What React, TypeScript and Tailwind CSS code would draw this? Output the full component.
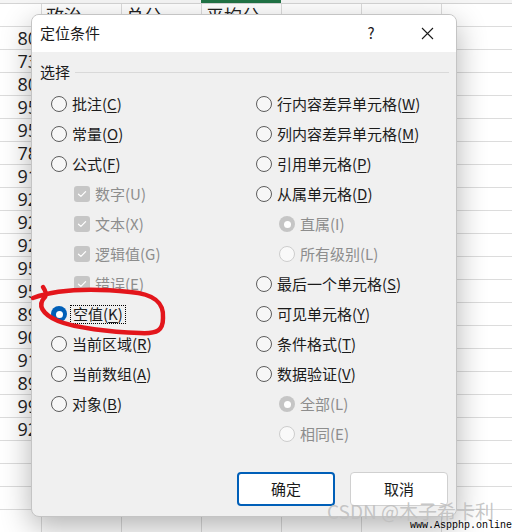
import React from "react";

const cjk = { fontFamily: '"Noto Sans CJK SC", "Noto Sans", sans-serif' };

const nums = [80, 73, 80, 95, 95, 78, 91, 92, 92, 92, 95, 95, 89, 90, 91, 89, 99, 92];

function Sheet() {
  const rows = Array.from({ length: 23 }, (_, i) => i);
  return (
    <div className="flex flex-col w-[522px]">
      <div className="flex h-[4px] border-b border-[#d4d4d4] bg-[#f5f5f5]">
        <div className="w-[201px]" />
        <div className="w-[80px] h-[3px] bg-[#217346]" />
      </div>
      {rows.map((r) => (
        <div key={r} className="flex h-[23px] border-b border-[#dcdcdc]">
          <div className="w-[42px] border-r border-[#dcdcdc] flex items-center justify-end pr-[3px] text-[18px] text-[#222]" style={{ fontFamily: '"Open Sans", sans-serif' }}>
            {r >= 1 && r <= 18 ? nums[r - 1] : ""}
          </div>
          {["政治", "总分", "平均分", "", "", ""].map((h, c) => (
            <div key={c} className="w-[80px] border-r border-[#dcdcdc] flex items-center pl-[4px] text-[18px] text-[#222]" style={cjk}>
              {r === 0 ? h : ""}
            </div>
          ))}
        </div>
      ))}
    </div>
  );
}

function Radio({ state }: { state: "off" | "on" | "dison" | "disoff" }) {
  if (state === "on")
    return (
      <div className="w-4 h-4 rounded-full bg-[#005fb8] flex items-center justify-center shrink-0">
        <div className="w-[7px] h-[7px] rounded-full bg-white" />
      </div>
    );
  if (state === "dison")
    return (
      <div className="w-4 h-4 rounded-full bg-[#c5c5c5] flex items-center justify-center shrink-0">
        <div className="w-[7px] h-[7px] rounded-full bg-white" />
      </div>
    );
  if (state === "disoff")
    return <div className="w-4 h-4 rounded-full border border-[#cdcdcd] bg-[#f9f9f9] shrink-0" />;
  return <div className="w-4 h-4 rounded-full border border-[#5c5c5c] bg-[#f7f7f7] shrink-0" />;
}

function Check() {
  return (
    <div className="w-4 h-4 rounded-[3px] bg-[#c6c6c6] flex items-center justify-center shrink-0">
      <svg width="10" height="8" viewBox="0 0 10 8">
        <path d="M1.5 4.2 L3.9 6.4 L8.6 1.6" fill="none" stroke="#fff" strokeWidth="1.2" strokeLinecap="round" strokeLinejoin="round" />
      </svg>
    </div>
  );
}

type OptProps = {
  text: string;
  mn: string;
  kind?: "radio" | "check";
  state?: "off" | "on" | "dison" | "disoff";
  sub?: boolean;
  focus?: boolean;
};

function Opt({ text, mn, kind = "radio", state = "off", sub, focus }: OptProps) {
  const disabled = kind === "check" || state === "dison" || state === "disoff";
  const label = (
    <span className={disabled ? "text-[#8d8d8d]" : "text-[#1b1b1b]"}>
      {text}(
      {disabled ? mn : <span className="underline underline-offset-[2px]">{mn}</span>})
    </span>
  );
  return (
    <div className={`flex items-center h-[30px] ${sub ? "pl-[23px]" : ""}`}>
      {kind === "check" ? <Check /> : <Radio state={state} />}
      {focus ? (
        <div className="ml-[3px] px-[2px] h-[19px] flex items-center border border-dotted border-black">{label}</div>
      ) : (
        <div className="ml-[5px]">{label}</div>
      )}
    </div>
  );
}

function Dialog() {
  return (
    <div
      className="absolute left-[31px] top-[14px] w-[426px] h-[503px] rounded-lg border border-[#c4c4c4] bg-[#f0f0f0] flex flex-col shadow-[0_10px_30px_rgba(0,0,0,0.3)] overflow-hidden text-[15px]"
      style={cjk}
    >
      <div className="h-[37px] bg-white flex items-center pl-[8px] shrink-0">
        <div className="flex-1 text-[15px] text-[#1b1b1b]">定位条件</div>
        <div className="w-[46px] text-center text-[15px] text-[#1b1b1b]">?</div>
        <div className="w-[46px] ml-[10px] mr-[6px] flex items-center justify-center">
          <svg width="13" height="13" viewBox="0 0 13 13">
            <path d="M1 1 L12 12 M12 1 L1 12" stroke="#1b1b1b" strokeWidth="1.1" />
          </svg>
        </div>
      </div>
      <div className="flex-1 flex flex-col pt-[10px]">
        <div className="flex items-center h-[20px] pl-[8px] pr-[7px]">
          <span className="text-[#1b1b1b]">选择</span>
          <div className="flex-1 ml-[5px] border-t border-[#d9d9d9]" />
        </div>
        <div className="flex mt-[7px]">
          <div className="w-[224px] pl-[19px] flex flex-col">
            <Opt text="批注" mn="C" />
            <Opt text="常量" mn="O" />
            <Opt text="公式" mn="F" />
            <Opt text="数字" mn="U" kind="check" sub />
            <Opt text="文本" mn="X" kind="check" sub />
            <Opt text="逻辑值" mn="G" kind="check" sub />
            <Opt text="错误" mn="E" kind="check" sub />
            <Opt text="空值" mn="K" state="on" focus />
            <Opt text="当前区域" mn="R" />
            <Opt text="当前数组" mn="A" />
            <Opt text="对象" mn="B" />
          </div>
          <div className="flex-1 flex flex-col">
            <Opt text="行内容差异单元格" mn="W" />
            <Opt text="列内容差异单元格" mn="M" />
            <Opt text="引用单元格" mn="P" />
            <Opt text="从属单元格" mn="D" />
            <Opt text="直属" mn="I" state="dison" sub />
            <Opt text="所有级别" mn="L" state="disoff" sub />
            <Opt text="最后一个单元格" mn="S" />
            <Opt text="可见单元格" mn="Y" />
            <Opt text="条件格式" mn="T" />
            <Opt text="数据验证" mn="V" />
            <Opt text="全部" mn="L" state="dison" sub />
            <Opt text="相同" mn="E" state="disoff" sub />
          </div>
        </div>
        <div className="mt-auto flex justify-end gap-[15px] pr-[8px] pb-[10px]">
          <button className="w-[98px] h-[34px] rounded-[4px] bg-white border-2 border-[#005fb8] text-[#1b1b1b]">确定</button>
          <button className="w-[98px] h-[34px] rounded-[4px] bg-white border border-[#d0d0d0] text-[#1b1b1b]">取消</button>
        </div>
      </div>
    </div>
  );
}

export default function App() {
  return (
    <div className="relative w-[512px] h-[532px] overflow-hidden bg-white">
      <Sheet />
      <Dialog />
      <svg className="absolute inset-0 pointer-events-none" width="512" height="532" viewBox="0 0 512 532">
        <path
          d="M33 298 C55 290, 90 288, 130 292 C155 294, 164 303, 163 318 C163 330, 158 334, 140 333 C110 332, 75 328, 58 321 C42 314, 37 305, 45 297 C47 294, 45 290, 43 287"
          fill="none"
          stroke="#e3161c"
          strokeWidth="4.5"
          strokeLinecap="round"
          strokeLinejoin="round"
        />
      </svg>
      <div className="absolute left-[327px] top-[497px] text-[19px] text-[#bfbfbf]/90 whitespace-nowrap" style={cjk}>
        CSDN @木子希卡利
      </div>
      <div className="absolute left-[410px] top-[518px] text-[10px] text-black whitespace-nowrap" style={{ fontFamily: '"Liberation Mono", monospace' }}>
        www.Aspphp.online
      </div>
    </div>
  );
}
